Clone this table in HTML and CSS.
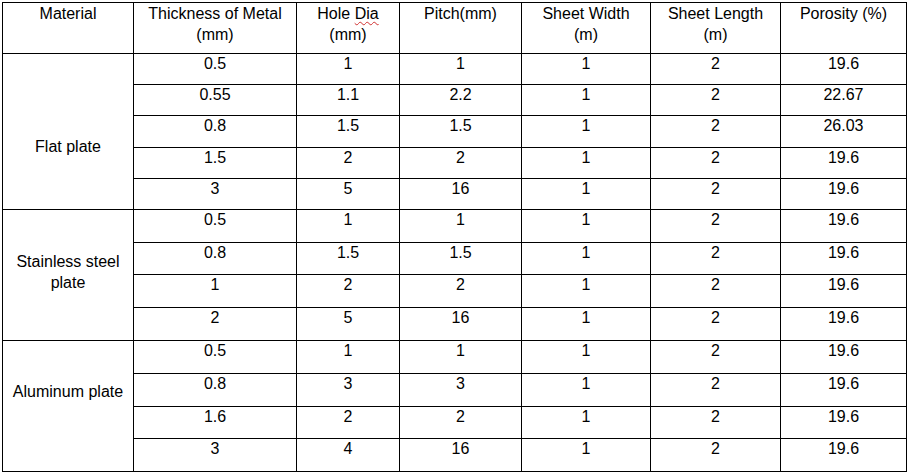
FILE: index.html
```html
<!DOCTYPE html>
<html lang="en">
<head>
<meta charset="utf-8">
<title>Perforated sheet specifications</title>
<link rel="stylesheet" href="styles.css">
</head>
<body>
<table class="spec">
  <colgroup>
    <col class="c-mat">
    <col class="c-thk">
    <col class="c-hole">
    <col class="c-pitch">
    <col class="c-width">
    <col class="c-length">
    <col class="c-por">
  </colgroup>
  <thead>
    <tr class="head">
      <th>Material</th>
      <th>Thickness of Metal<br>(mm)</th>
      <th>Hole <span class="spell">Dia</span><br>(mm)</th>
      <th>Pitch(mm)</th>
      <th>Sheet Width<br>(m)</th>
      <th>Sheet Length<br>(m)</th>
      <th>Porosity (%)</th>
    </tr>
  </thead>
  <tbody>
    <tr class="r31"><td rowspan="5" class="mat mat-flat">Flat plate</td><td>0.5</td><td>1</td><td>1</td><td>1</td><td>2</td><td>19.6</td></tr>
    <tr class="r31"><td>0.55</td><td>1.1</td><td>2.2</td><td>1</td><td>2</td><td>22.67</td></tr>
    <tr class="r32"><td>0.8</td><td>1.5</td><td>1.5</td><td>1</td><td>2</td><td>26.03</td></tr>
    <tr class="r31"><td>1.5</td><td>2</td><td>2</td><td>1</td><td>2</td><td>19.6</td></tr>
    <tr class="r31"><td>3</td><td>5</td><td>16</td><td>1</td><td>2</td><td>19.6</td></tr>

    <tr class="r33"><td rowspan="4" class="mat mat-steel">Stainless steel<br>plate</td><td>0.5</td><td>1</td><td>1</td><td>1</td><td>2</td><td>19.6</td></tr>
    <tr class="r32"><td>0.8</td><td>1.5</td><td>1.5</td><td>1</td><td>2</td><td>19.6</td></tr>
    <tr class="r33"><td>1</td><td>2</td><td>2</td><td>1</td><td>2</td><td>19.6</td></tr>
    <tr class="r33"><td>2</td><td>5</td><td>16</td><td>1</td><td>2</td><td>19.6</td></tr>

    <tr class="r33"><td rowspan="4" class="mat mat-alu">Aluminum plate</td><td>0.5</td><td>1</td><td>1</td><td>1</td><td>2</td><td>19.6</td></tr>
    <tr class="r33"><td>0.8</td><td>3</td><td>3</td><td>1</td><td>2</td><td>19.6</td></tr>
    <tr class="r32"><td>1.6</td><td>2</td><td>2</td><td>1</td><td>2</td><td>19.6</td></tr>
    <tr class="r33"><td>3</td><td>4</td><td>16</td><td>1</td><td>2</td><td>19.6</td></tr>
  </tbody>
</table>
</body>
</html>
```
FILE: styles.css
```css
html, body {
  margin: 0;
  padding: 0;
  background: #ffffff;
}

body {
  font-family: "Liberation Sans", Arial, sans-serif;
  font-size: 16px;
  color: #000000;
}

.spec {
  margin: 2px 0 0 2px;
  width: 905px;
  table-layout: fixed;
  border-collapse: separate;
  border-spacing: 0;
  border-top: 1px solid #000;
  border-left: 1px solid #000;
}

.c-mat { width: 131px; }
.c-thk { width: 163px; }
.c-hole { width: 103px; }
.c-pitch { width: 122px; }
.c-width { width: 129px; }
.c-length { width: 130px; }
.c-por { width: 126px; }

.spec th,
.spec td {
  box-sizing: border-box;
  padding: 0;
  border-right: 1px solid #000;
  border-bottom: 1px solid #000;
  text-align: center;
  vertical-align: top;
  font-weight: normal;
  white-space: nowrap;
}

.spec th {
  line-height: 21px;
}

.spec td {
  line-height: 19px;
}

.head { height: 51px; }
.r31 { height: 31px; }
.r32 { height: 32px; }
.r33 { height: 33px; }

.spec td.mat {
  line-height: 21px;
}

.spec td.mat-flat { padding-top: 82px; }
.spec td.mat-steel { padding-top: 41px; }
.spec td.mat-alu { padding-top: 40px; }

.spell {
  text-decoration: underline wavy #d03030;
  text-decoration-thickness: 1px;
  text-underline-offset: 2px;
}
```
